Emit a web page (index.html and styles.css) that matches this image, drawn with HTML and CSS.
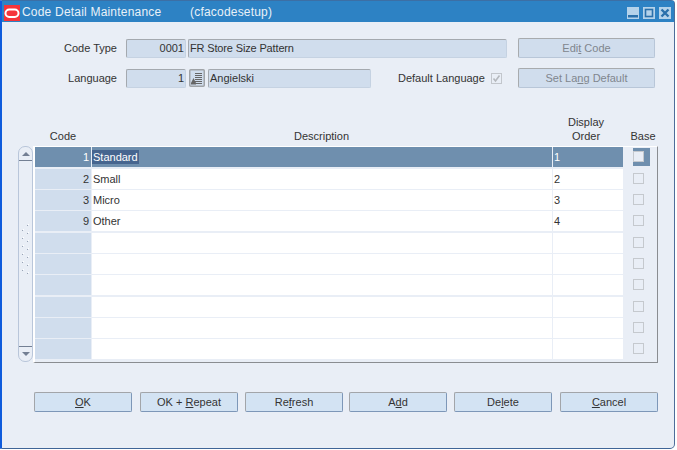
FILE: index.html
```html
<!DOCTYPE html>
<html>
<head>
<title>Code Detail Maintenance</title>
<meta name="viewport" content="width=device-width, initial-scale=1.0">
<link rel="stylesheet" href="styles.css">
</head>
<body>

<div class="window">
  <div class="titlebar">
    <svg class="logo" width="16" height="16" viewBox="0 0 16 16"><rect width="16" height="16" fill="#f5343a"/><rect x="1.5" y="4.5" width="13" height="7.5" rx="3.7" fill="none" stroke="#fff" stroke-width="2"/></svg>
    <span class="title">Code Detail Maintenance</span>
    <span class="title-form">(cfacodesetup)</span>
    <div class="winbtns">
      <svg width="12" height="12" viewBox="0 0 12 12"><rect width="12" height="12" fill="#b4d2ea"/><rect x="1" y="8" width="10" height="2.500" fill="#2a70ab"/></svg>
      <svg width="12" height="12" viewBox="0 0 12 12"><rect width="12" height="12" fill="#b4d2ea"/><rect x="2.500" y="2.500" width="7" height="7" fill="none" stroke="#2a70ab" stroke-width="1.600"/></svg>
      <svg width="12" height="12" viewBox="0 0 12 12"><rect width="12" height="12" fill="#b4d2ea"/><path d="M2.500 2.500l7 7M9.500 2.500l-7 7" stroke="#2a70ab" stroke-width="2.400"/></svg>
    </div>
  </div>

  <div class="form">
    <div class="form-row first">
      <span class="form-label">Code Type</span>
      <span class="field num w-code">0001</span>
      <span class="field w-desc">FR Store Size Pattern</span>
      <button class="btn-off"><span>Edi<u>t</u> Code</span></button>
    </div>
    <div class="form-row second">
      <span class="form-label">Language</span>
      <span class="field num w-code">1</span>
      <span class="lov">
        <svg width="16" height="18" viewBox="0 0 16 18"><rect x=".75" y=".75" width="14.500" height="16.500" rx="1" fill="#d0dded" stroke="#a0a4a8" stroke-width="1.500"/><path d="M6 4.500h7M6 6.500h7M6 8.500h7M6 10.500h7M6 12.500h7M6 14.500h7" stroke="#666"/><path d="M2 14l2.500-5 2.500 5v1.500H2z" fill="#666"/></svg>
      </span>
      <span class="field w-lang">Angielski</span>
      <span class="default-label">Default Language</span>
      <span class="check disabled-check">
        <svg width="11" height="11" viewBox="0 0 11 11"><path d="M2.500 5.500l2 2.500 4-5.500" fill="none" stroke="#b4b8bd" stroke-width="1.600"/></svg>
      </span>
      <button class="btn-off wide"><span>Set La<u>n</u>g Default</span></button>
    </div>
  </div>

  <div class="block">
    <div class="heads">
      <span class="h-code">Code</span>
      <span class="h-desc">Description</span>
      <span class="h-order">Display<br>Order</span>
      <span class="h-base">Base</span>
    </div>
    <div class="table-wrap">
      <div class="scrollbar">
        <div class="sb-up"><i class="arrow-up"></i></div>
        <div class="sb-track">
          <svg width="13" height="52" viewBox="0 0 13 52">
            <defs><pattern id="grip" width="2" height="8" patternUnits="userSpaceOnUse"><rect x="0" y="1" width="1" height="1" fill="#98a3b5"/><rect x="1" y="0" width="1" height="1" fill="#fff"/></pattern></defs>
            <g transform="translate(3,5)"><rect width="2" height="42" fill="url(#grip)"/></g>
            <g transform="translate(8,0)"><rect width="2" height="50" fill="url(#grip)"/></g>
          </svg>
        </div>
        <div class="sb-down"><i class="arrow-down"></i></div>
      </div>
      <div class="grid">
        <div class="row selected">
          <span class="c-code">1</span><span class="c-desc"><em>Standard</em></span><span class="c-order">1</span>
          <span class="c-base"><i class="box"></i></span>
        </div>
        <div class="row gap2">
          <span class="c-code">2</span><span class="c-desc">Small</span><span class="c-order">2</span>
          <span class="c-base"><i class="box"></i></span>
        </div>
        <div class="row">
          <span class="c-code">3</span><span class="c-desc">Micro</span><span class="c-order">3</span>
          <span class="c-base"><i class="box"></i></span>
        </div>
        <div class="row">
          <span class="c-code">9</span><span class="c-desc">Other</span><span class="c-order">4</span>
          <span class="c-base"><i class="box"></i></span>
        </div>
        <div class="row gap2">
          <span class="c-code"></span><span class="c-desc"></span><span class="c-order"></span>
          <span class="c-base"><i class="box"></i></span>
        </div>
        <div class="row">
          <span class="c-code"></span><span class="c-desc"></span><span class="c-order"></span>
          <span class="c-base"><i class="box"></i></span>
        </div>
        <div class="row">
          <span class="c-code"></span><span class="c-desc"></span><span class="c-order"></span>
          <span class="c-base"><i class="box"></i></span>
        </div>
        <div class="row gap2">
          <span class="c-code"></span><span class="c-desc"></span><span class="c-order"></span>
          <span class="c-base"><i class="box"></i></span>
        </div>
        <div class="row">
          <span class="c-code"></span><span class="c-desc"></span><span class="c-order"></span>
          <span class="c-base"><i class="box"></i></span>
        </div>
        <div class="row">
          <span class="c-code"></span><span class="c-desc"></span><span class="c-order"></span>
          <span class="c-base"><i class="box"></i></span>
        </div>
      </div>
    </div>
  </div>

  <div class="actions">
    <button><span><u>O</u>K</span></button>
    <button><span>OK + <u>R</u>epeat</span></button>
    <button><span>Re<u>f</u>resh</span></button>
    <button><span>A<u>d</u>d</span></button>
    <button><span>De<u>l</u>ete</span></button>
    <button><span><u>C</u>ancel</span></button>
  </div>
</div>

</body>
</html>
```

FILE: styles.css
```css
html, body {
  margin: 0;
  padding: 0;
  background: #fff;
}
body {
  width: 677px;
  height: 450px;
  overflow: hidden;
  font-family: "Liberation Sans", Arial, sans-serif;
  font-size: 11px;
  color: #333;
}
.window {
  box-sizing: border-box;
  width: 675px;
  height: 449px;
  background: #e9eef6;
  border-left: 2px solid #0f5bdc;
  border-right: 1px solid #4d6d9a;
  border-bottom: 1px solid #3f6597;
  border-top: 1px solid #3c6fa5;
  border-top-right-radius: 4px;
  border-bottom-right-radius: 5px;
}
.titlebar {
  height: 21px;
  background: #2d82c4;
  display: flex;
  align-items: center;
  font-size: 12px;
  letter-spacing: .2px;
}
.logo {
  margin-left: 2px;
  margin-top: 3px;
}
.title {
  margin-left: 2px;
  width: 168px;
  color: #e8f1f8;
}
.title-form {
  color: #e8f1f8;
}
.winbtns {
  margin-left: auto;
  margin-right: 3px;
  margin-top: 2px;
  display: flex;
  gap: 4px;
}

.form {
  height: 78px;
}
.form-row {
  display: flex;
  align-items: center;
  height: 20px;
}
.form-row.first {
  margin-top: 16px;
}
.form-row.second {
  margin-top: 10px;
}
.form-label {
  width: 115px;
  text-align: right;
  margin-right: 9px;
}
.field {
  box-sizing: border-box;
  height: 19px;
  line-height: 17px;
  background: #d0dded;
  border: 1px solid #d0dded;
  border-top-color: #a4a9af;
  border-left-color: #a4a9af;
  border-right-color: #c5d2e2;
  border-bottom-color: #c5d2e2;
  border-radius: 2px;
  padding: 0 1px;
  white-space: nowrap;
}
.num {
  text-align: right;
}
.w-code {
  width: 60px;
  margin-right: 2px;
}
.w-desc {
  width: 319px;
  margin-right: 11px;
  letter-spacing: -.15px;
}
.w-lang {
  width: 163px;
}
.lov {
  display: flex;
  margin-left: 1px;
  margin-right: 3px;
}
.default-label {
  margin-left: 27px;
  width: 93px;
}
.check {
  box-sizing: border-box;
  width: 11px;
  height: 11px;
  border: 1px solid #c2c6cc;
  display: flex;
  align-items: center;
  justify-content: center;
}
.check svg {
  flex: none;
}
.wide {
  margin-left: 16px;
}
button {
  box-sizing: border-box;
  height: 20px;
  width: 98px;
  background: #d3e3f3;
  border: 1px solid #a2a5a9;
  border-right-color: #7d97b8;
  border-bottom-color: #7d97b8;
  border-radius: 2px;
  font-family: inherit;
  font-size: 11px;
  color: #333;
  padding: 0;
}
.btn-off {
  width: 137px;
  background: #d0dded;
  color: #80868e;
  border-color: #a8abae #b8c6d8 #b8c6d8 #a8abae;
}

.block {
  margin-left: 16px;
}
.heads {
  display: flex;
  align-items: flex-end;
  height: 27px;
  text-align: center;
  line-height: 14px;
}
.h-code {
  margin-left: 17px;
  width: 56px;
}
.h-desc {
  width: 461px;
}
.h-order {
  width: 68px;
}
.h-base {
  width: 34px;
  margin-left: 6px;
}
.table-wrap {
  display: flex;
  margin-top: 3px;
  height: 217px;
}
.scrollbar {
  box-sizing: border-box;
  width: 15px;
  height: 216px;
  border: 1px solid #b9c6da;
  border-radius: 7px;
  background: #e9eef6;
  display: flex;
  flex-direction: column;
}
.sb-up {
  height: 13px;
  border-bottom: 1px solid #737f93;
  display: flex;
  justify-content: center;
  align-items: center;
}
.sb-down {
  height: 14px;
  border-top: 1px solid #737f93;
  display: flex;
  justify-content: center;
  align-items: center;
}
.sb-track {
  flex: 1;
  display: flex;
  align-items: center;
  justify-content: center;
  padding-bottom: 8px;
}
.sb-track svg {
  display: block;
}
.arrow-up {
  border: 4px solid transparent;
  border-top: 0;
  border-bottom: 4px solid #737f93;
}
.arrow-down {
  border: 4px solid transparent;
  border-bottom: 0;
  border-top: 4px solid #737f93;
}
.grid {
  box-sizing: border-box;
  width: 625px;
  height: 217px;
  border-left: 2px solid #fff;
  border-top: 1px solid #fff;
  border-right: 1px solid #8a8d91;
  border-bottom: 1px solid #8a8d91;
}
.row {
  display: flex;
  height: 20px;
  line-height: 20px;
  margin-top: 1px;
}
.row:first-child {
  margin-top: 0;
}
.row.gap2 {
  margin-top: 2px;
}
.row span {
  display: block;
  box-sizing: border-box;
  white-space: nowrap;
}
.c-code {
  width: 56px;
  margin-right: 1px;
  background: #d0dded;
  text-align: right;
  padding-right: 2px;
}
.c-desc {
  width: 460px;
  margin-right: 1px;
  background: #fff;
  padding-left: 1px;
}
.c-order {
  width: 70px;
  background: #fff;
  padding-left: 1px;
}
.c-base {
  flex: 1;
  display: flex !important;
  align-items: center;
  padding-left: 10px;
  padding-bottom: 2px;
}
.box {
  box-sizing: border-box;
  display: block;
  width: 11px;
  height: 11px;
  border: 1px solid #c5c9ce;
}
.selected .c-code,
.selected .c-desc,
.selected .c-order {
  background: #6f8fae;
  color: #fff;
}
.selected em {
  font-style: normal;
  background: #46658f;
  padding: 1px;
  margin-left: -1px;
}
.selected .c-base {
  padding-bottom: 0;
}
.selected .box {
  width: 17px;
  height: 18px;
  background: #6f8fae;
  border: 0;
  position: relative;
}
.selected .box::after {
  content: "";
  box-sizing: border-box;
  display: block;
  width: 11px;
  height: 11px;
  position: absolute;
  left: 0;
  top: 3px;
  background: #e9eef6;
  border: 1px solid #c5c9ce;
}

.actions {
  display: flex;
  margin-top: 29px;
  margin-left: 32px;
}
.actions button:nth-child(2),
.actions button:nth-child(6) {
  margin-left: 8px;
}
.actions button:nth-child(3),
.actions button:nth-child(5) {
  margin-left: 7px;
}
.actions button:nth-child(4) {
  margin-left: 6px;
}
```
